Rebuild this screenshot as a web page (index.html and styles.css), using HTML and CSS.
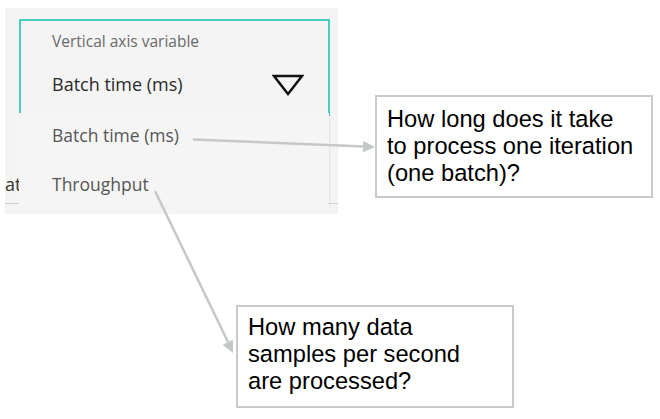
FILE: index.html
```html
<!DOCTYPE html>
<html lang="en">
<head>
    <meta charset="UTF-8">
    <title>Vertical axis variable</title>
    <link rel="stylesheet" href="styles.css">
</head>
<body>
    <div class="panel">
        <div class="select">
            <div class="select-label">Vertical axis variable</div>
            <div class="select-row">
                <span class="select-value">Batch time (ms)</span>
                <svg class="caret" width="32" height="22" viewBox="0 0 32 22">
                    <polygon points="2,2 30,2 16,20" fill="none" stroke="#111" stroke-width="2.5" stroke-linejoin="miter"/>
                </svg>
            </div>
        </div>
        <div class="field">
            <span class="field-text">Data</span>
        </div>
        <ul class="menu">
            <li>Batch time (ms)</li>
            <li>Throughput</li>
        </ul>
    </div>

    <div class="callout callout-batch">How long does it take to process one iteration (one batch)?</div>
    <div class="callout callout-throughput">How many data samples per second are processed?</div>

    <svg class="arrows" width="660" height="419" viewBox="0 0 660 419">
        <!-- batch time -> first callout -->
        <line x1="193" y1="139.5" x2="364" y2="146.5" stroke="#c4c8c8" stroke-width="2.5"/>
        <polygon points="375,147 362.8,152.5 363.2,141" fill="#c4c8c8"/>
        <!-- throughput -> second callout -->
        <line x1="155" y1="191" x2="228" y2="342" stroke="#c4c8c8" stroke-width="2.5"/>
        <polygon points="233,353 222.6,344.8 233,339.6" fill="#c4c8c8"/>
    </svg>
</body>
</html>
```

FILE: styles.css
```css
body {
    margin: 0;
    background-color: white;
    width: 660px;
    height: 419px;
    position: relative;
    overflow: hidden;
    font-family: "Open Sans", "Noto Sans", sans-serif;
}

.panel {
    position: relative;
    margin: 8px 0 0 5px;
    width: 333px;
    padding: 11px 8px 10px 14px;
    box-sizing: border-box;
    background-color: #f4f4f4;
    overflow: hidden;
}

.select {
    border: 2px solid #44d0c4;
    border-bottom: none;
    padding: 11px 24px 20px 31px;
}

.select-label {
    font-size: 15.5px;
    line-height: 18px;
    color: #6a6a6a;
}

.select-row {
    display: flex;
    justify-content: space-between;
    align-items: center;
    margin-top: 21px;
}

.select-value {
    font-size: 18px;
    line-height: 22px;
    color: #2a2a2a;
}

.caret {
    display: block;
    margin-top: 3px;
}

.field {
    margin: 0 -8px 0 -14px;
    padding: 57px 0 8px 0;
    border-bottom: 1px solid #cfcfcf;
}

.field-text {
    display: block;
    margin-left: -13px;
    font-size: 18px;
    line-height: 22px;
    color: #333;
}

.menu {
    position: absolute;
    top: 105px;
    left: 14px;
    width: 310px;
    height: 92px;
    margin: 0;
    padding: 0;
    list-style: none;
    background-color: #f5f5f5;
    box-shadow: 1px 0 1px rgba(0, 0, 0, 0.06);
}

.menu li {
    padding: 11px 31px 15px 33px;
    font-size: 17.5px;
    line-height: 22px;
    color: #555;
}

.menu li + li {
    padding-top: 12px;
}

.callout {
    position: absolute;
    width: 278px;
    height: 103px;
    box-sizing: border-box;
    border: 2px solid #c8cbcb;
    background-color: white;
    padding: 9px 14px 0 10px;
    font-family: "Liberation Sans", Arial, sans-serif;
    font-size: 23.7px;
    line-height: 27px;
    color: #000;
}

.callout-batch {
    left: 375px;
    top: 95px;
}

.callout-throughput {
    left: 236px;
    top: 305px;
    padding-top: 7px;
    padding-right: 30px;
}

.arrows {
    position: absolute;
    left: 0;
    top: 0;
    pointer-events: none;
}
```
